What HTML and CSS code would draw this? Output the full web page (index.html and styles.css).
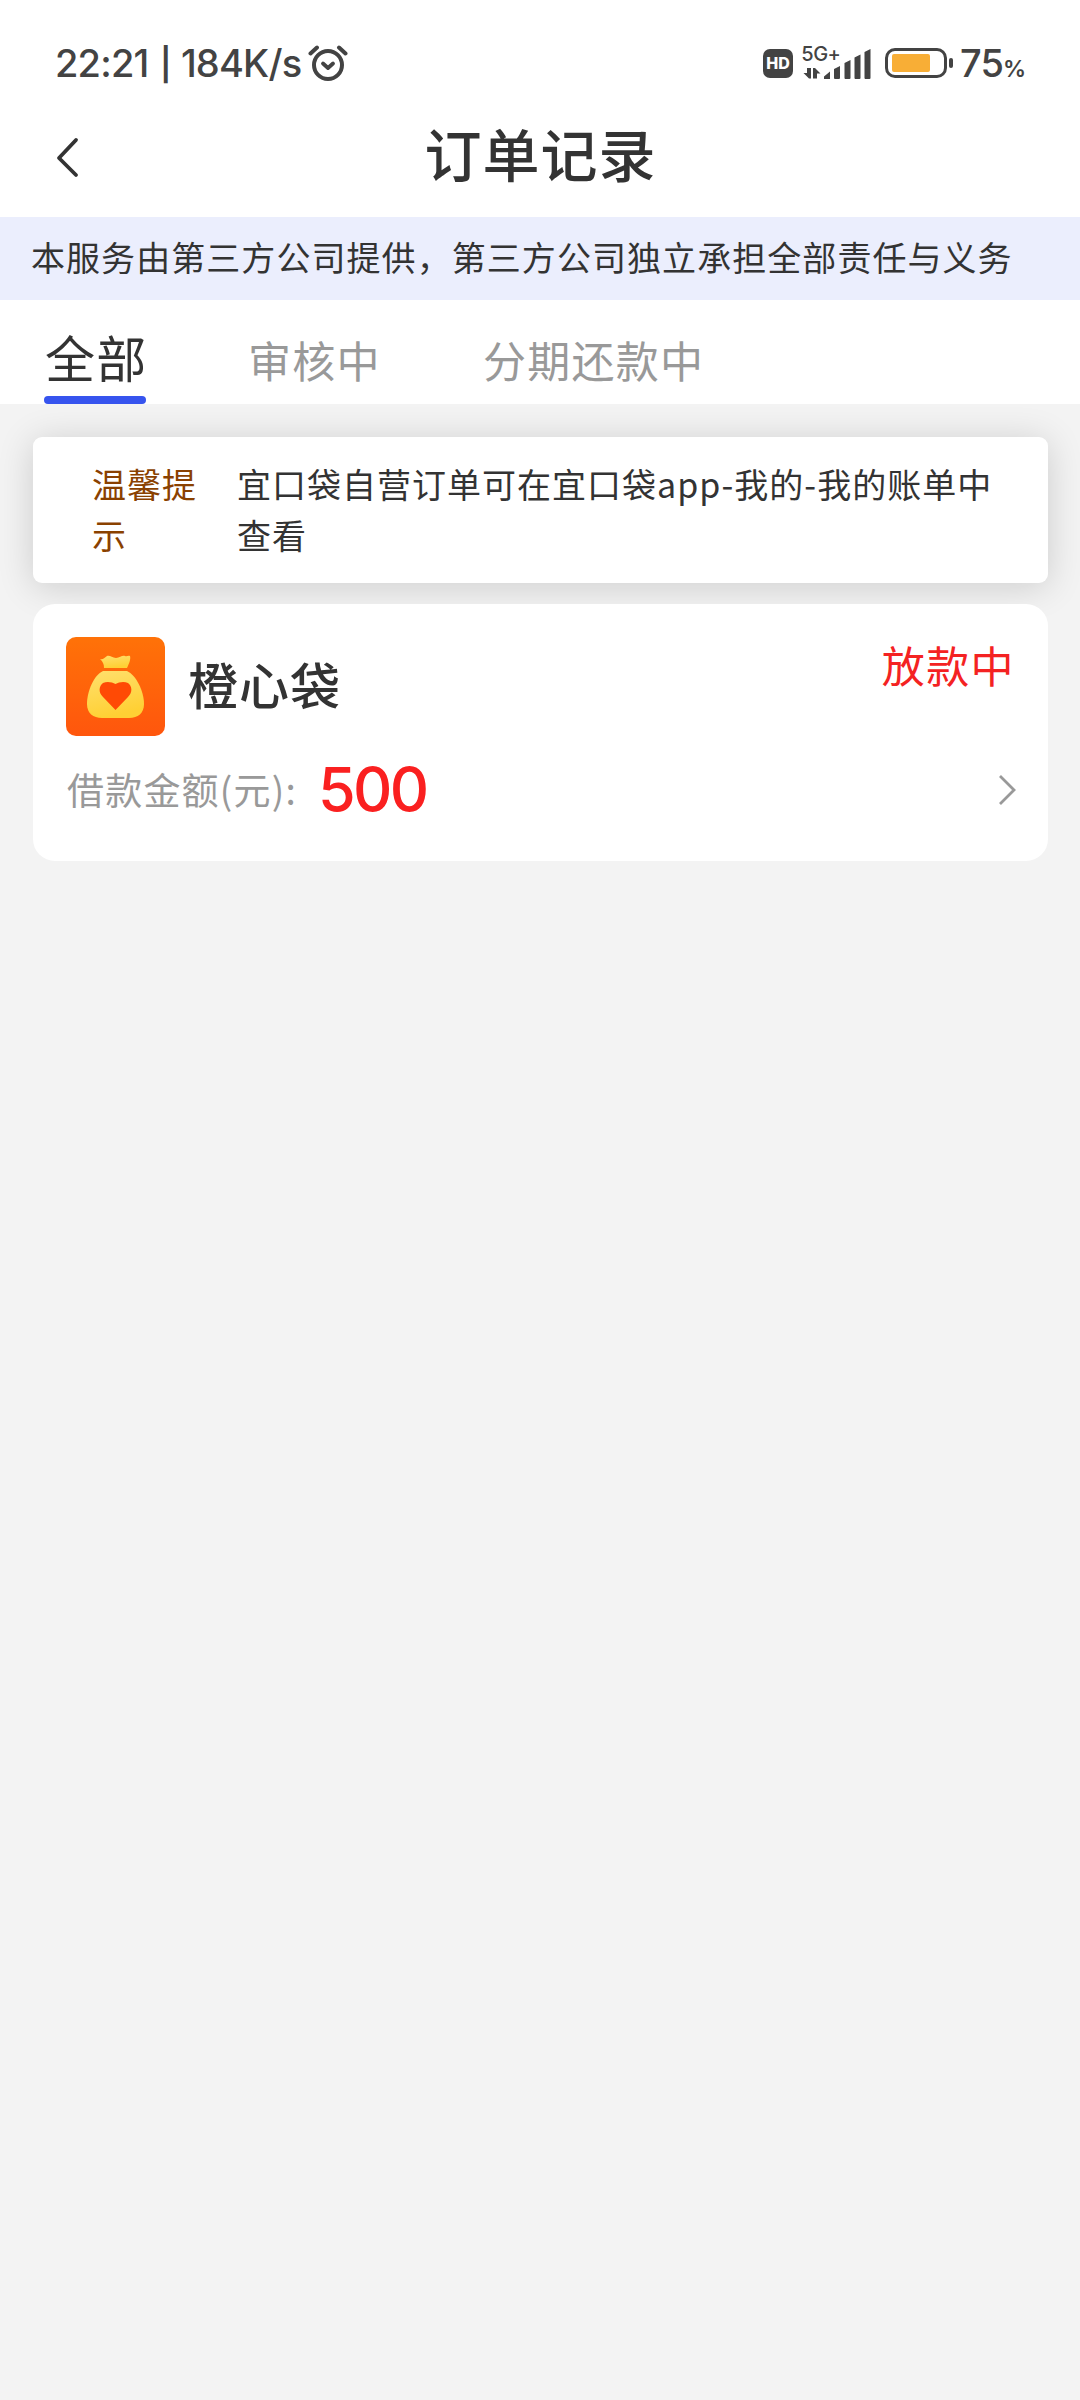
FILE: index.html
```html
<!DOCTYPE html>
<html lang="zh-CN">
<head>
    <meta charset="UTF-8">
    <meta name="viewport" content="width=device-width, initial-scale=1.0">
    <title>订单记录</title>
    <link rel="stylesheet" href="styles.css">
</head>
<body>

<div class="status-bar">
    <div class="status-left">
        <span class="time">22:21 <b>|</b> 184K/s</span>
        <svg class="alarm" width="40" height="38" viewBox="0 0 40 38" fill="none" stroke="#434343" stroke-linecap="round" stroke-linejoin="round">
            <circle cx="20" cy="21" r="14" stroke-width="4"/>
            <path d="M15 19.500l5 4.500 5-4.500" stroke-width="3.800"/>
            <path d="M2.500 9.500L9 3.500M37.500 9.500L31 3.500" stroke-width="4"/>
        </svg>
    </div>
    <div class="status-right">
        <span class="hd">HD</span>
        <div class="signal">
            <span class="network">5G+</span>
            <svg width="72" height="34" viewBox="0 0 72 34" fill="#434343">
                <path d="M7 22h4v10.500H9L3.500 27h3.500zM13 22h2l5.500 5.500H17v5h-4z"/>
                <path d="M24 30.500l6-5v7q0 .5-.5.5H24.500q-.5 0-.5-.5zM34 23l6-3v12q0 1-1 1h-4q-1 0-1-1zM44.500 17l6-3v18q0 1-1 1H45.500q-1 0-1-1zM54.500 11.500l6-3v23.500q0 1-1 1H55.500q-1 0-1-1zM64.500 6l6-3v29q0 1-1 1H65.500q-1 0-1-1z"/>
            </svg>
        </div>
        <div class="battery"><div class="battery-level"></div></div>
        <div class="battery-cap"></div>
        <span class="percent">75<small>%</small></span>
    </div>
</div>

<header class="nav-bar">
    <svg class="back" width="24" height="42" viewBox="0 0 24 42" fill="none" stroke="#333" stroke-width="3.800" stroke-linecap="round" stroke-linejoin="round">
        <path d="M21 4L4 22l17 17"/>
    </svg>
    <h1>订单记录</h1>
</header>

<div class="notice">本服务由第三方公司提供，第三方公司独立承担全部责任与义务</div>

<nav class="tabs">
    <a class="tab active">全部</a>
    <a class="tab">审核中</a>
    <a class="tab">分期还款中</a>
</nav>

<main class="container">
    <div class="tip">
        <div class="tip-label">温馨提示</div>
        <div class="tip-text">宜口袋自营订单可在宜口袋app-我的-我的账单中查看</div>
    </div>

    <div class="order">
        <div class="order-head">
            <svg class="logo" width="99" height="99" viewBox="0 0 99 99">
                <defs>
                    <linearGradient id="bg" x1="0" y1="0" x2="0" y2="1">
                        <stop offset="0" stop-color="#ff7208"/>
                        <stop offset="1" stop-color="#ff560d"/>
                    </linearGradient>
                    <linearGradient id="bag" x1="0" y1="0" x2="0.3" y2="1">
                        <stop offset="0" stop-color="#ffe06e"/>
                        <stop offset="1" stop-color="#ffd034"/>
                    </linearGradient>
                </defs>
                <rect width="99" height="99" rx="10" fill="url(#bg)"/>
                <path d="M34 22c3 1 4-1 7-3 3-1 5 2 9 2s6-3 9-2c2 1 3-1 5 0 1 3-1 8-3 12H38c0-4-1-6-4-9z" fill="url(#bag)"/>
                <path d="M37 34h24c9 4 17 20 17 33 0 9-6 14-15 14H36c-9 0-15-5-15-14 0-13 7-29 16-33z" fill="url(#bag)"/>
                <path d="M49.500 73L37 60c-5-5-4-11 0-14 4-2 9-1 12.500 1 3.500-2 8.500-3 12.500-1 4 3 5 9 0 14z" fill="#ff4a05"/>
            </svg>
            <span class="order-name">橙心袋</span>
            <span class="order-status">放款中</span>
        </div>
        <div class="order-body">
            <span class="amount-label">借款金额(元):</span>
            <span class="amount">500</span>
            <svg class="arrow" width="18" height="32" viewBox="0 0 18 32" fill="none" stroke="#999" stroke-width="2.800">
                <path d="M2 3l14 14L2 31"/>
            </svg>
        </div>
    </div>
</main>

</body>
</html>
```
FILE: styles.css
```css
* {
    box-sizing: border-box;
}
body {
    margin: 0;
    min-height: 2400px;
    background-color: #f3f3f3;
    color: #333;
    font-family: "Noto Sans CJK SC", sans-serif;
}
svg {
    display: block;
    flex-shrink: 0;
}
.status-bar {
    display: flex;
    justify-content: space-between;
    height: 94px;
    padding: 32px 55px 0;
    background-color: #fff;
    color: #434343;
    font-family: Inter, "Noto Sans CJK SC", sans-serif;
}
.status-left, .status-right {
    display: flex;
    align-items: center;
    height: 62px;
}
.status-right {
    width: 262px;
}
.time {
    width: 253px;
    font-size: 38px;
    font-weight: 500;
    white-space: nowrap;
    letter-spacing: -0.8px;
}
.time b {
    margin: 0 1px 0 2px;
    font-size: 32px;
    font-weight: 600;
    vertical-align: 1px;
    line-height: 1;
}
.hd {
    width: 31px;
    height: 29px;
    border-radius: 7px;
    background-color: #434343;
    color: #fff;
    font-size: 16px;
    font-weight: 800;
    line-height: 29px;
    text-align: center;
}
.signal {
    position: relative;
    margin-left: 7px;
}
.network {
    position: absolute;
    left: 1px;
    top: -3px;
    font-size: 20px;
    font-weight: 500;
    line-height: 22px;
    letter-spacing: -0.5px;
}
.battery {
    width: 63px;
    height: 30px;
    margin-left: 13px;
    padding: 3px 4px;
    border: 3px solid #434343;
    border-radius: 10px;
}
.battery-level {
    width: 38px;
    height: 18px;
    border-radius: 2px;
    background-color: #f8ae36;
}
.battery-cap {
    width: 4px;
    height: 10px;
    margin-left: 2px;
    border-radius: 2px;
    background-color: #434343;
}
.percent {
    margin-left: 7px;
    font-size: 38px;
    font-weight: 500;
    letter-spacing: -1px;
    white-space: nowrap;
}
.percent small {
    font-size: 23px;
    font-weight: 600;
}
.nav-bar {
    position: relative;
    height: 123px;
    background-color: #fff;
}
.nav-bar h1 {
    margin: 0;
    font-size: 57px;
    font-weight: 500;
    line-height: 117px;
    text-align: center;
    text-indent: 1px;
    letter-spacing: 1px;
}
.back {
    position: absolute;
    left: 55px;
    top: 42px;
}
.notice {
    height: 83px;
    padding-left: 31px;
    background-color: #ebeefd;
    font-size: 34px;
    line-height: 80px;
    letter-spacing: 1.06px;
    white-space: nowrap;
}
.tabs {
    display: flex;
    align-items: flex-end;
    height: 104px;
    padding-left: 44px;
    background-color: #fff;
}
.tab {
    height: 86px;
    margin-left: 102px;
    color: #999;
    font-size: 43px;
    line-height: 82px;
    letter-spacing: 1.3px;
    white-space: nowrap;
}
.tab.active {
    position: relative;
    width: 102px;
    margin-left: 0;
    color: #333;
    font-size: 50px;
    line-height: 77px;
    text-indent: 1px;
}
.tab.active::after {
    content: "";
    position: absolute;
    left: 0;
    bottom: 0;
    width: 102px;
    height: 8px;
    border-radius: 4px;
    background-color: #3654ee;
}
.container {
    padding: 33px 32px 0 33px;
}
.tip {
    display: flex;
    height: 146px;
    padding: 21px 0 0 59px;
    border-radius: 9px;
    background-color: #fff;
    box-shadow: 0 4px 36px rgba(0, 0, 0, 0.16);
    font-size: 34px;
    line-height: 51px;
    letter-spacing: 1px;
}
.tip-label {
    width: 110px;
    margin-right: 35px;
    color: #8a4100;
}
.tip-text {
    width: 765px;
}
.order {
    position: relative;
    height: 257px;
    margin-top: 21px;
    padding: 33px;
    border-radius: 22px;
    background-color: #fff;
}
.order-head {
    display: flex;
    height: 99px;
}
.order-name {
    margin-left: 23px;
    font-size: 50px;
    font-weight: 500;
    line-height: 93px;
    letter-spacing: 1px;
}
.order-status {
    margin-left: auto;
    color: #f42222;
    font-size: 43px;
    line-height: 55px;
    letter-spacing: 1.4px;
}
.order-body {
    display: flex;
    align-items: center;
    height: 106px;
}
.amount-label {
    width: 252px;
    padding-left: 1px;
    color: #999;
    font-size: 37px;
    letter-spacing: 1.2px;
    white-space: nowrap;
}
.amount {
    color: #fa2020;
    font-family: Inter, sans-serif;
    font-size: 61px;
    font-weight: 500;
    letter-spacing: -2.7px;
}
.arrow {
    margin-left: auto;
    margin-right: -1px;
}
```
